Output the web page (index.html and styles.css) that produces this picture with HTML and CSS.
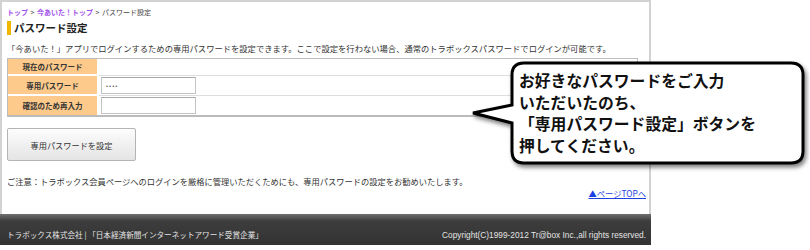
FILE: index.html
```html
<!DOCTYPE html>
<html lang="ja">
<head>
<meta charset="utf-8">
<title>パスワード設定</title>
<link rel="stylesheet" href="styles.css">
</head>
<body>
<div class="stage">
  <div class="page">
    <div class="content">
      <div class="crumbs"><a href="#">トップ</a> &gt; <a href="#">今あいた！トップ</a> &gt; パスワード設定</div>
      <h1 class="title">パスワード設定</h1>
      <p class="desc">「今あいた！」アプリでログインするための専用パスワードを設定できます。ここで設定を行わない場合、通常のトラボックスパスワードでログインが可能です。</p>
      <table class="form">
        <tr class="r1"><th>現在のパスワード</th><td></td></tr>
        <tr class="r2"><th>専用パスワード</th><td><input class="field" type="password" value="abcd"></td></tr>
        <tr class="r3"><th>確認のため再入力</th><td><input class="field" type="password" value=""></td></tr>
      </table>
      <button class="submit" type="button">専用パスワードを設定</button>
      <p class="note">ご注意：トラボックス会員ページへのログインを厳格に管理いただくためにも、専用パスワードの設定をお勧めいたします。</p>
      <div class="totop"><a href="#">▲ページTOPへ</a></div>
    </div>
    <div class="footer">
      <span>トラボックス株式会社 | 「日本経済新聞インターネットアワード受賞企業」</span>
      <span class="copy">Copyright(C)1999-2012 Tr@box Inc.,all rights reserved.</span>
    </div>
  </div>
  <div class="callout">
    <svg class="bubble" width="340" height="112" viewBox="0 0 340 112">
      <path d="M54 3 H321 Q333 3 333 15 V91 Q333 103 321 103 H54 Q42 103 42 91 V63 L3 53 L42 45 V15 Q42 3 54 3 Z" fill="#fff" stroke="#000" stroke-width="3" stroke-linejoin="miter"/>
    </svg>
    <div class="callout-text">お好きなパスワードをご入力<br>いただいたのち、<br>「専用パスワード設定」ボタンを<br>押してください。</div>
  </div>
</div>
</body>
</html>
```

FILE: styles.css
```css
html, body {
  margin: 0;
  padding: 0;
  background: #fff;
}
body {
  font-family: "Noto Sans CJK JP", "Noto Sans", sans-serif;
  color: #333;
}
.stage {
  position: relative;
  width: 810px;
  height: 250px;
}
.page {
  width: 651px;
  box-sizing: border-box;
  border: 2px solid #d2d2d2;
  border-bottom: none;
}
.content {
  padding: 2px 3px 0 5px;
}
.crumbs {
  font-size: 7px;
  line-height: 12px;
  height: 12px;
  margin-top: 2px;
  color: #444;
  word-spacing: 1px;
}
.crumbs a {
  color: #a252ec;
  text-decoration: none;
  font-weight: bold;
}
.title {
  margin: 3px 0 0 0;
  height: 14px;
  line-height: 14px;
  font-size: 10.5px;
  font-weight: bold;
  color: #222;
  border-left: 4px solid #f2b600;
  padding-left: 3px;
}
.desc {
  margin: 6px 0 0 0;
  font-size: 8.3px;
  line-height: 14px;
  white-space: nowrap;
  color: #333;
}
.form {
  margin-top: 3px;
  width: 631px;
  border-collapse: separate;
  border-spacing: 0;
  border: 1px solid #bdbdbd;
  border-bottom: 2px solid #bbb;
}
.form th {
  width: 89px;
  background: #fdca8c;
  font-size: 7.5px;
  font-weight: bold;
  color: #333;
  text-align: center;
  padding: 0;
  border-right: 2px solid #fff;
  border-bottom: 2px solid #fff;
}
.form td {
  padding: 0 0 0 2px;
  border-bottom: 1px solid #ddd;
}
.form tr.r3 th { border-bottom: none; }
.form tr.r3 td { border-bottom: none; }
.form tr.r1 th, .form tr.r1 td { height: 15px; }
.form tr.r2 th, .form tr.r2 td { height: 18px; }
.form tr.r3 th, .form tr.r3 td { height: 19px; }
.field {
  display: block;
  box-sizing: border-box;
  width: 95px;
  height: 17px;
  margin: 0;
  padding: 0 4px;
  border: 1px solid #c4c4c4;
  border-top-color: #a8a8a8;
  font-size: 6px;
  letter-spacing: 1px;
  color: #666;
  background: #fff;
  outline: none;
}
.submit {
  display: block;
  margin-top: 11px;
  width: 129px;
  height: 33px;
  box-sizing: border-box;
  border: 1px solid #b4b4b4;
  border-radius: 2px;
  background: linear-gradient(#fdfdfd, #e4e4e4);
  font-family: "Noto Sans CJK JP", sans-serif;
  font-size: 8.2px;
  color: #333;
  padding: 0;
}
.note {
  margin: 14px 0 0 0;
  font-size: 8.25px;
  line-height: 12px;
  white-space: nowrap;
}
.totop {
  text-align: right;
  font-size: 8.3px;
  line-height: 12px;
  margin-right: 0;
}
.totop a {
  color: #1d3ee0;
  text-decoration: underline;
}
.footer {
  margin: 15px -2px 0 -2px;
  height: 31px;
  box-sizing: border-box;
  background: linear-gradient(#707070, #3d3d3d 7px, #333);
  display: flex;
  justify-content: space-between;
  align-items: flex-end;
  padding: 0 5px 5px 7px;
  color: #e4e4e4;
  font-size: 7.6px;
  line-height: 10px;
}
.footer .copy {
  font-family: "Liberation Sans", Arial, sans-serif;
  font-size: 8.3px;
}
.callout {
  position: absolute;
  left: 470px;
  top: 60px;
  width: 340px;
  height: 112px;
}
.bubble {
  display: block;
  filter: drop-shadow(2px 3px 2px rgba(0, 0, 0, 0.5));
}
.callout-text {
  position: absolute;
  left: 49px;
  top: 10px;
  font-size: 15.8px;
  line-height: 21.7px;
  font-weight: bold;
  color: #111;
  white-space: nowrap;
}
```
